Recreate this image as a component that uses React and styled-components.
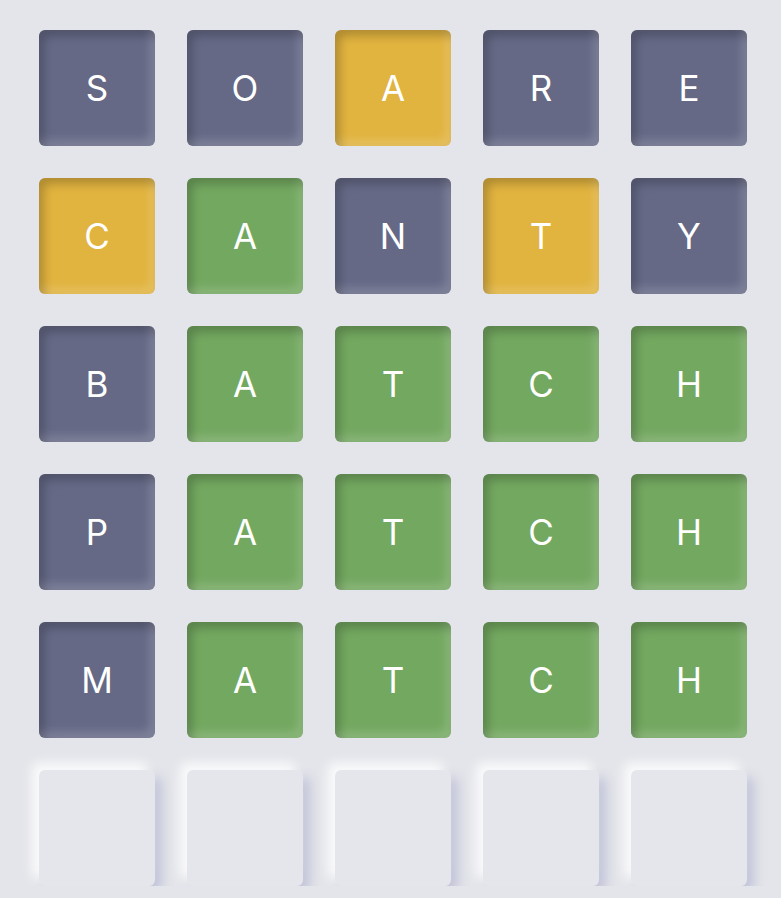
import React from "react";
import styled, { createGlobalStyle } from "styled-components";

const GlobalStyle = createGlobalStyle`
  html, body {
    margin: 0;
    background: #e4e5ea;
  }
  body {
    font-family: Inter, "Noto Sans", sans-serif;
  }
`;

const Board = styled.div`
  display: grid;
  grid-template-columns: repeat(5, 116px);
  grid-auto-rows: 116px;
  gap: 32px;
  padding: 30px 0 0 39px;
`;

const colors = {
  absent: "#656986",
  present: "#e1b33f",
  correct: "#73a860",
  empty: "#e5e6eb",
};

const Tile = styled.div`
  display: flex;
  align-items: center;
  justify-content: center;
  border-radius: 6px;
  background: ${(p) => colors[p.$state]};
  color: #fff;
  font-size: 35px;
  font-weight: 400;
  box-shadow: ${(p) =>
    p.$state === "empty"
      ? "-7px -7px 12px rgba(255,255,255,0.85), 7px 7px 12px rgba(150,155,195,0.45)"
      : "inset 5px 6px 10px rgba(0,0,0,0.22), inset -5px -6px 10px rgba(255,255,255,0.17)"};
`;

const rows = [
  ["SOARE", "aapaa"],
  ["CANTY", "pcapa"],
  ["BATCH", "acccc"],
  ["PATCH", "acccc"],
  ["MATCH", "acccc"],
  ["     ", "eeeee"],
];

const stateMap = { a: "absent", p: "present", c: "correct", e: "empty" };

export default function App() {
  return (
    <>
      <GlobalStyle />
      <Board>
        {rows.map(([word, states], r) =>
          word.split("").map((ch, i) => (
            <Tile key={`${r}-${i}`} $state={stateMap[states[i]]}>
              {ch.trim()}
            </Tile>
          ))
        )}
      </Board>
    </>
  );
}
